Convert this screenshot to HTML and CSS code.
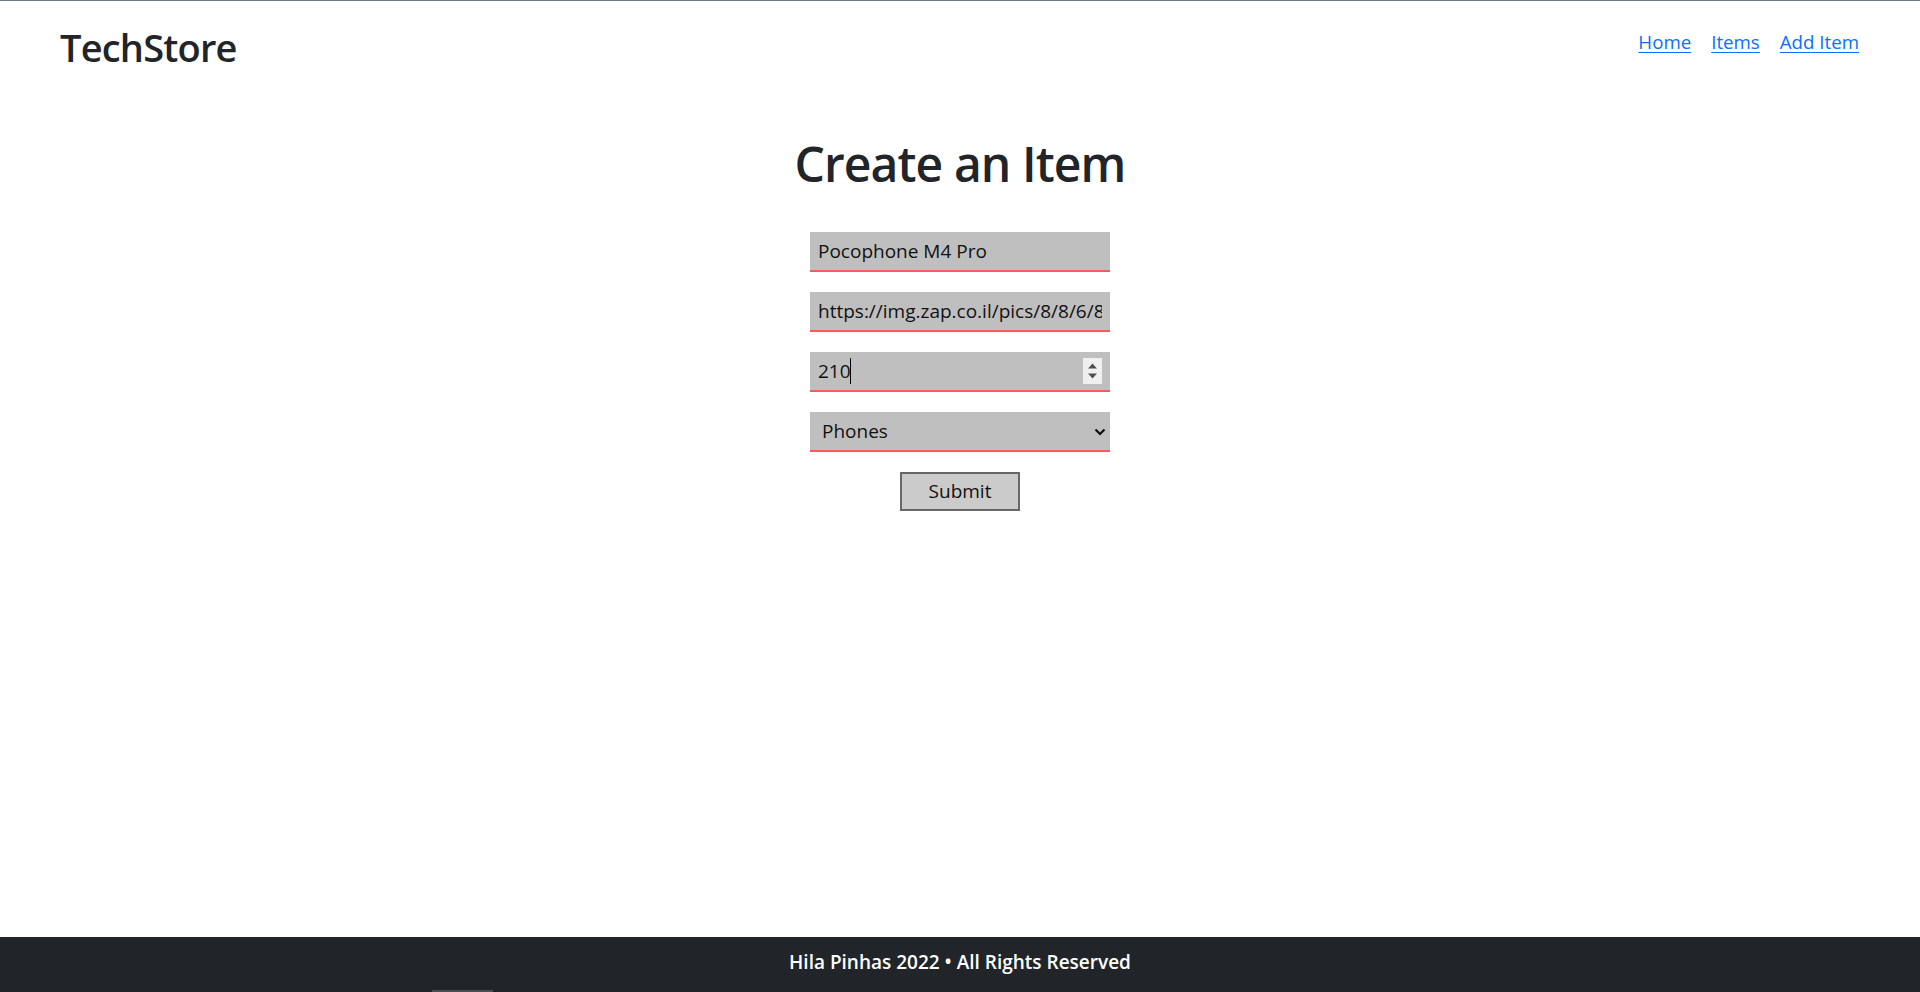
FILE: index.html
```html
<!DOCTYPE html>
<html lang="en">
<head>
<meta charset="utf-8">
<title>TechStore</title>
<link rel="stylesheet" href="styles.css">
</head>
<body>
<div class="page">
  <header class="topbar">
    <a class="brand">TechStore</a>
    <nav class="nav">
      <a href="#" class="nav-link">Home</a>
      <a href="#" class="nav-link">Items</a>
      <a href="#" class="nav-link">Add Item</a>
    </nav>
  </header>
  <main class="main">
    <h1 class="title">Create an Item</h1>
    <form class="form">
      <div class="field"><input class="input" type="text" value="Pocophone M4 Pro"></div>
      <div class="field"><input class="input" type="text" value="https://img.zap.co.il/pics/8/8/6/8/60428688b.gif"></div>
      <div class="field">
        <input class="input" type="text" value="210">
        <span class="caret"></span>
        <span class="spinner">
          <svg width="19" height="26" viewBox="0 0 19 26"><path d="M5 10.5 L9.5 5.5 L14 10.5 Z M5 15.5 L14 15.5 L9.5 20.5 Z" fill="#505050"/></svg>
        </span>
      </div>
      <div class="field">
        <select class="input select">
          <option>Phones</option>
        </select>
        <svg class="chevron" width="12" height="8" viewBox="0 0 12 8"><path d="M1.5 1.5 L6 6 L10.5 1.5" fill="none" stroke="#111" stroke-width="2.2"/></svg>
      </div>
      <button type="button" class="submit">Submit</button>
    </form>
  </main>
  <footer class="footer">Hila Pinhas 2022 • All Rights Reserved</footer>
  <span class="thumb"></span>
</div>
</body>
</html>
```
FILE: styles.css
```css
* { box-sizing: border-box; }
html, body { margin: 0; padding: 0; }
body {
  font-family: "Open Sans", "Noto Sans", sans-serif;
  color: #212529;
  background: #fff;
}
.page {
  position: relative;
  height: 992px;
  display: flex;
  flex-direction: column;
  border-top: 1px solid #6c7a83;
}
.topbar {
  display: flex;
  justify-content: space-between;
  align-items: flex-start;
  padding: 0 61px 0 60px;
}
.brand {
  font-size: 38px;
  font-weight: 600;
  line-height: 1;
  margin-top: 27px;
  color: #212529;
  letter-spacing: -0.8px;
}
.nav {
  display: flex;
  gap: 20px;
  margin-top: 30px;
}
.nav-link {
  color: #0d6efd;
  font-size: 18.7px;
  line-height: 1.2;
  text-decoration: underline;
  text-underline-offset: 3px;
}
.main {
  flex: 1;
  display: flex;
  flex-direction: column;
  align-items: center;
}
.title {
  font-size: 48px;
  font-weight: 600;
  line-height: 1.2;
  margin: 69px 0 0;
  letter-spacing: -0.9px;
}
.form {
  display: flex;
  flex-direction: column;
  align-items: center;
  gap: 20px;
  margin-top: 39px;
}
.field {
  position: relative;
  width: 300px;
  height: 40px;
}
.input {
  display: block;
  width: 300px;
  height: 40px;
  margin: 0;
  border: none;
  border-bottom: 2px solid #ff5a5a;
  background: #bfbfbf;
  font-family: inherit;
  font-size: 19px;
  color: #111;
  padding: 0 8px;
  outline: none;
  border-radius: 0;
}
.select {
  appearance: none;
  -webkit-appearance: none;
  padding-left: 12px;
}
.chevron {
  position: absolute;
  right: 4px;
  top: 16px;
}
.caret {
  position: absolute;
  left: 40px;
  top: 6px;
  width: 1px;
  height: 26px;
  background: #000;
}
.spinner {
  position: absolute;
  right: 8px;
  top: 6px;
  width: 19px;
  height: 26px;
  background: #f0f0f0;
  display: flex;
}
.submit {
  width: 120px;
  height: 39px;
  border: 2px solid #676767;
  background: #cbcbcb;
  font-family: inherit;
  font-size: 19px;
  color: #111;
  padding: 0;
}
.footer {
  height: 55px;
  background: #212529;
  color: #fff;
  font-size: 19px;
  font-weight: 600;
  display: flex;
  align-items: center;
  justify-content: center;
  padding-bottom: 6px;
}
.thumb {
  position: absolute;
  left: 432px;
  bottom: 0;
  width: 61px;
  height: 2px;
  background: #4d4d4d;
}
```
